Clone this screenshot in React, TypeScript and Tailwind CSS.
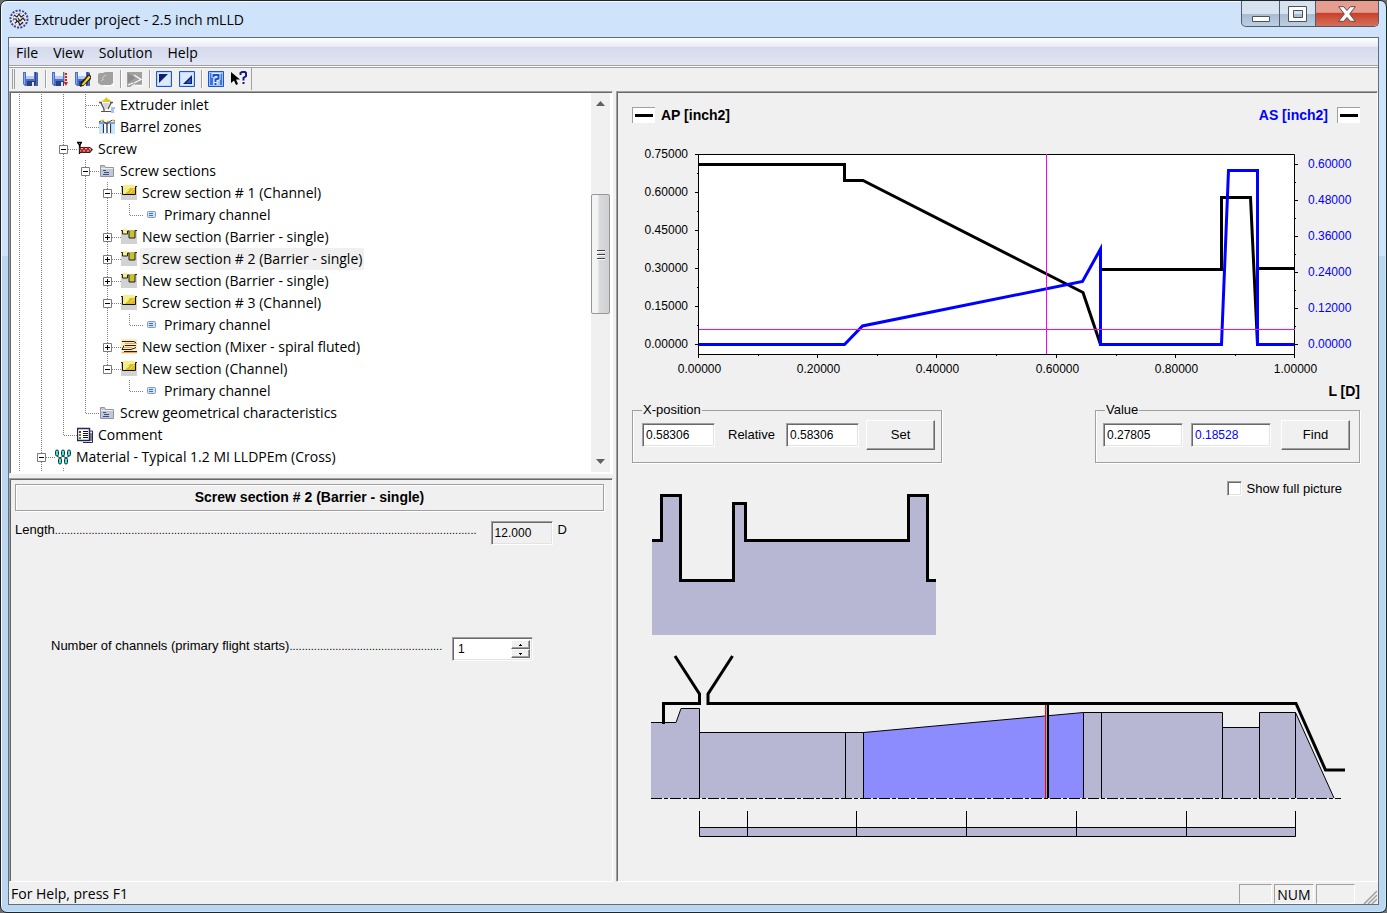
import type { ReactNode } from "react";

const sunken =
  "border border-t-[#a0a0a0] border-l-[#a0a0a0] border-r-white border-b-white shadow-[inset_1px_1px_0_#696969,inset_-1px_-1px_0_#e3e3e3]";
const panel =
  "border border-t-[#a0a0a0] border-l-[#a0a0a0] border-r-white border-b-white p-px shadow-[inset_1px_1px_0_#696969]";
const raised =
  "border border-t-white border-l-white border-r-[#696969] border-b-[#696969] bg-[#f0f0f0] shadow-[inset_-1px_-1px_0_#a0a0a0]";
const field = `${sunken} h-6 px-[3px] text-[12px] outline-none rounded-none`;
const uiFont = "font-['Open_Sans','Noto_Sans',sans-serif]";

/* ---------- icons ---------- */

function Icon({ children }: { children: ReactNode }) {
  return (
    <svg width="16" height="16" viewBox="0 0 16 16" className="shrink-0" aria-hidden="true">
      {children}
    </svg>
  );
}

const Floppy = () => (
  <>
    <path d="M0 1h14l1 1v13H2l-2-2z" fill="#4a70cc" />
    <path d="M14.500 2v13" stroke="#55607c" />
    <path d="M1 2h1v11H1z" fill="#8badf0" />
    <path d="M3 1h8v7H3z" fill="#eef3fc" />
    <path d="M3 5h8v3H3z" fill="#b9cbee" />
    <path d="M4 10h8v5H4z" fill="#2b3f80" />
    <path d="M9 11h2v4H9z" fill="#dfe7f7" />
    <path d="M12 1h1v13h-1z" fill="#2d4796" />
  </>
);

const SaveIcon = () => (
  <Icon>
    <Floppy />
  </Icon>
);

const SaveReportIcon = () => (
  <Icon>
    <Floppy />
    <path d="M12 0h4v16h-4z" fill="#f4f0f0" />
    <path d="M12.500 1v11" stroke="#b8b0b0" />
    <path d="M14 2v9" stroke="#d02020" strokeWidth="2" strokeDasharray="2 1" />
    <path d="M11.500 11H16l-2 4z" fill="#d02020" />
  </Icon>
);

const SaveEditIcon = () => (
  <Icon>
    <Floppy />
    <path d="M5 16l1-5 8-8 2 2v3l-8 7z" fill="#1a1a1a" />
    <path d="M6.500 13.500l7.500-9 1.500 2L8 14.500z" fill="#ffd21c" />
  </Icon>
);

const ImportIcon = () => (
  <Icon>
    <path d="M0 3l2-1h3l2-1h8v11l-2 2H3l-3-2z" fill="#a0a0a0" />
    <path d="M4 8q1-3 4-4M3 10l3-2" stroke="#cfcfcf" fill="none" />
    <path d="M16 2v12h-3l-1 1H6" stroke="#fff" fill="none" />
  </Icon>
);

const RunIcon = () => (
  <Icon>
    <path d="M0 1h15v13H9l-2-1-4 3H0z" fill="#a0a0a0" />
    <path d="M1 2l7 5-7 5z" fill="#8a8a8a" />
    <path d="M7 4l7 4.500L7 12M1 14l5-2M9 14.500h7V9" stroke="#fafafa" strokeWidth="1.300" fill="none" />
  </Icon>
);

const CornerIcon = ({ lower = false }: { lower?: boolean }) => (
  <Icon>
    <path d="M.5 .5h15v15H.5z" fill="#bcd6ff" stroke="#1c55d6" />
    <path d="M2 2h12v12H2z" fill="#dceaff" />
    <path d={lower ? "M13 4v9H4z" : "M3 3h9l-9 9z"} fill="#10206e" />
    {lower && <path d="M12 7v5H7z" fill="#2355c9" />}
  </Icon>
);

const HelpIcon = () => (
  <Icon>
    <path d="M.5 .5h15v15H.5z" fill="#9fc3fa" stroke="#1c55d6" />
    <path d="M2 2h3v12H2zM12 3h2v11h-2z" fill="#3b74e4" />
    <path d="M5.500 6.500V4h5v3.500l-3 2V14" stroke="#e8f1ff" strokeWidth="4" fill="none" />
    <path d="M5.500 6V4h5v3.500l-3 1V11M7.500 12v2" stroke="#1f4fc4" strokeWidth="2" fill="none" />
  </Icon>
);

const PointerHelpIcon = () => (
  <Icon>
    <path d="M0 1v11l3-2.500 2 4.500 2-1-2-4.500h4z" fill="#000" />
    <path d="M9.500 4V2l1.500-1h3l1 1v3l-2.500 2v2.500M12.500 11v2" stroke="#17178a" strokeWidth="2" fill="none" />
  </Icon>
);

const InletIcon = () => (
  <Icon>
    <path d="M3 5q1-3 3-3l1-2 2 2q2 0 3 3z" fill="#e5c51f" />
    <path d="M0 5.500h3M11 5.500h3M2 6l3 6v2M12 6l-3 6" stroke="#555" strokeWidth="1.400" fill="none" />
    <path d="M3.500 6h7l-2.500 6H6z" fill="#d5d5d5" />
    <path d="M2 14.500h10" stroke="#555" />
    <path d="M12 10h4v2h-1v4h-3z" fill="#a9c1fb" />
  </Icon>
);

const BarrelIcon = () => (
  <Icon>
    <path d="M0 5h16v10H0z" fill="#c9e5fc" />
    <path d="M0 3h16v2H0z" fill="#66a7ea" />
    <path d="M4.500 5v9M8 4v10M11.500 5v9" stroke="#2a3550" strokeWidth="1.200" />
    <path d="M5 5h2v9H5zM9 5h2v9H9z" fill="#fff" />
    <path d="M0 3q3-3 5 0t5 0 6-1" stroke="#4b3a12" fill="none" />
    <path d="M2 1.500h3M8 2.500h2M13 1.500h2" stroke="#f0b21c" strokeWidth="1.500" />
  </Icon>
);

const ScrewIcon = () => (
  <Icon>
    <path d="M0 1.500h5M1 2l1.500 2v9M4 2L3 4v2" stroke="#000" fill="none" strokeWidth="1.300" />
    <path d="M2 6h11l3 2.500-3 3.500H2z" fill="#222" />
    <path d="M3 7h10l1 1.500-1 2H3z" fill="#f6eaea" />
    <path d="M3 7l2 3.500L7 7l2 3.500L11 7l2 3.500" stroke="#cc1111" strokeWidth="1.600" fill="none" />
  </Icon>
);

const FolderIcon = () => (
  <Icon>
    <path d="M1.500 2.500h4l1 2h8v9h-13z" fill="#c4c7cb" stroke="#92969c" />
    <path d="M2 5h12v1H2z" fill="#eceef0" />
    <path d="M4 7.500h3M5 9.500h5M4 11.500h6" stroke="#2a4fa8" />
  </Icon>
);

const ChannelIcon = () => (
  <Icon>
    <path d="M0 1h16v14H0z" fill="#d2d2d2" />
    <path d="M2 0h12v9H2z" fill="#f6f08a" />
    <path d="M4 9l5-6h5v6z" fill="#d9bb2c" />
    <path d="M6 7l2-2M9 8l4-4" stroke="#f5e04c" />
    <path d="M0 1.500h1.500v8h13v-8H16" stroke="#111" fill="none" />
  </Icon>
);

const BarrierIcon = () => (
  <Icon>
    <path d="M0 1h16v14H0z" fill="#d2d2d2" />
    <path d="M2 0h4v5H2z" fill="#f6f08a" />
    <path d="M8 1h6v8H8z" fill="#c8c22c" />
    <path d="M0 1.500h1.500V5h5V2H8v7h6V1.500h2" stroke="#222" fill="none" />
  </Icon>
);

const MixerIcon = () => (
  <Icon>
    <path d="M0 0h16v15H0z" fill="#fdeebf" />
    <path d="M4 4.500h10M2 8.500h9M1 13.500h15" stroke="#f3a070" />
    <path d="M1 2.500h11q3 0 3 2M4 6.500h11M3 6.500l-2 4h9l5-2M3 12.500h13" stroke="#2e1c10" fill="none" />
  </Icon>
);

const DotIcon = () => (
  <Icon>
    <rect x="4.500" y="4.500" width="8" height="6" rx="1" fill="#cfe3f8" stroke="#7f9cc0" />
    <path d="M6 6.500h4M6 8.500h4" stroke="#3f6fc0" />
  </Icon>
);

const CommentIcon = () => (
  <Icon>
    <path d="M6 4h9.500v11.500H6" fill="#fff" stroke="#24245c" />
    <path d="M.5 1.500h12v12H.5z" fill="#fff" stroke="#24245c" strokeWidth="1.400" />
    <path d="M2 4h2v2H2z" fill="#c01818" />
    <path d="M2 7h2v2H2zM2 10h2v2H2z" fill="#3d8c3d" />
    <path d="M6 4.500h5M6 6.500h5M6 8.500h5M6 10.500h5M14 6v8" stroke="#111" />
  </Icon>
);

const MaterialIcon = () => (
  <Icon>
    {[0, 6, 12].map((x) => (
      <rect key={x} x={x + 0.5} y="1" width="3" height="6" rx="1.500" fill="#4fdcdc" stroke="#0b3b3b" />
    ))}
    {[3, 9].map((x) => (
      <rect key={x} x={x + 0.5} y="9" width="3" height="6" rx="1.500" fill="#4fdcdc" stroke="#0b3b3b" />
    ))}
    <path d="M2 7l3 2M8 7L5 9M8 7l3 2M14 7l-3 2" stroke="#0b3b3b" />
  </Icon>
);

const AppIcon = () => (
  <svg width="20" height="20" viewBox="0 0 20 20" aria-hidden="true">
    <circle cx="10" cy="10" r="8.500" fill="#eef0f8" stroke="#3a3aa0" strokeWidth="2" strokeDasharray="2 1.300" />
    <circle cx="10" cy="10" r="6" fill="none" stroke="#777" strokeDasharray="2 2" />
    <path
      d="M5 6l3 2 2-3 2 3 3-2M4 10h3l1 3M9 9l2 3 3-3 2 3M6 14l3-2 2 4 3-3"
      stroke="#222"
      strokeWidth="1.200"
      fill="none"
    />
  </svg>
);

/* ---------- tree ---------- */

// one letter per level: v line, t branch, l last branch, m open, e open + last, p closed, _ nothing
type Row = { guides: string; label: string; icon: ReactNode; selected?: boolean };

const rows: Row[] = [
  { guides: "vvvt", label: "Extruder inlet", icon: <InletIcon /> },
  { guides: "vvvl", label: "Barrel zones", icon: <BarrelIcon /> },
  { guides: "vvm", label: "Screw", icon: <ScrewIcon /> },
  { guides: "vvvm", label: "Screw sections", icon: <FolderIcon /> },
  { guides: "vvvvm", label: "Screw section # 1 (Channel)", icon: <ChannelIcon /> },
  { guides: "vvvvvl", label: "Primary channel", icon: <DotIcon /> },
  { guides: "vvvvp", label: "New section (Barrier - single)", icon: <BarrierIcon /> },
  { guides: "vvvvp", label: "Screw section # 2 (Barrier - single)", icon: <BarrierIcon />, selected: true },
  { guides: "vvvvp", label: "New section (Barrier - single)", icon: <BarrierIcon /> },
  { guides: "vvvvm", label: "Screw section # 3 (Channel)", icon: <ChannelIcon /> },
  { guides: "vvvvvl", label: "Primary channel", icon: <DotIcon /> },
  { guides: "vvvvp", label: "New section (Mixer - spiral fluted)", icon: <MixerIcon /> },
  { guides: "vvvve", label: "New section (Channel)", icon: <ChannelIcon /> },
  { guides: "vvvv_l", label: "Primary channel", icon: <DotIcon /> },
  { guides: "vvvl", label: "Screw geometrical characteristics", icon: <FolderIcon /> },
  { guides: "vvl", label: "Comment", icon: <CommentIcon /> },
  { guides: "vm", label: "Material - Typical 1.2 MI LLDPEm (Cross)", icon: <MaterialIcon /> },
];

function Guide({ kind, first }: { kind: string; first: boolean }) {
  const box = "mep".includes(kind);
  return (
    <svg
      width={first ? 19 : 22}
      height="22"
      viewBox={first ? "3 0 19 22" : "0 0 22 22"}
      className="shrink-0 overflow-visible"
      aria-hidden="true"
    >
      <g stroke="#808080" strokeDasharray="1 1" fill="none">
        {kind !== "_" && <path d={kind === "l" || kind === "e" ? "M11.500 0v11" : "M11.500 0v22"} />}
        {kind !== "v" && kind !== "_" && <path d="M12 11.500h13" />}
      </g>
      {box && (
        <>
          <path d="M7.500 7.500h8v8h-8z" fill="#fff" stroke="#7a7a7a" />
          <path d={kind === "p" ? "M9 11.500h5M11.500 9v5" : "M9 11.500h5"} stroke="#000" />
        </>
      )}
    </svg>
  );
}

function TreeRow({ guides, label, icon, selected }: Row) {
  return (
    <li className="flex h-[22px] items-center" role="treeitem" aria-selected={!!selected}>
      {guides.split("").map((kind, i) => (
        <Guide key={i} kind={kind} first={i === 0} />
      ))}
      <span className="mx-[3px]">{icon}</span>
      <span className={`px-[2px] leading-[22px] whitespace-nowrap ${selected ? "bg-[#f0f0f0]" : ""}`}>{label}</span>
    </li>
  );
}

function Scrollbar() {
  const grip = "h-px w-2 bg-[#404040] shadow-[0_1px_0_#fff]";
  return (
    <div className="mr-px flex w-[19px] shrink-0 flex-col items-center bg-[#f0f0f0]">
      <svg width="9" height="5" viewBox="0 0 9 5" className="mt-2" aria-hidden="true">
        <path d="M4.500 0L9 5H0z" fill="#606060" />
      </svg>
      <div className="mt-[88px] flex h-[120px] w-[19px] flex-col items-center justify-center gap-[3px] rounded-[2px] border border-[#979797] bg-linear-to-r from-[#f3f3f3] from-35% via-[#d9dadc] via-40% to-[#cfd0d3]">
        <i className={grip} />
        <i className={grip} />
        <i className={grip} />
      </div>
      <svg width="9" height="5" viewBox="0 0 9 5" className="mt-auto mb-2" aria-hidden="true">
        <path d="M4.500 5L9 0H0z" fill="#606060" />
      </svg>
    </div>
  );
}

function Tree() {
  return (
    <div className={`${panel} flex h-[383px] bg-white`}>
      <ul role="tree" className={`min-w-0 flex-1 overflow-hidden pt-px text-[14px] ${uiFont}`}>
        {rows.map((row, i) => (
          <TreeRow key={i} {...row} />
        ))}
        <li className="flex" aria-hidden="true">
          <Guide kind="v" first />
          <Guide kind="v" first={false} />
          <Guide kind="v" first={false} />
        </li>
      </ul>
      <Scrollbar />
    </div>
  );
}

/* ---------- section properties ---------- */

const Leader = ({ dots }: { dots: number }) => (
  <span className="min-w-0 flex-1 overflow-hidden text-[11px] leading-[19px] whitespace-nowrap" aria-hidden="true">
    {".".repeat(dots)}
  </span>
);

function Properties() {
  return (
    <div className={`${panel} flex-1 text-[13px]`}>
      <div className="p-1">
        <h2 className="mr-[3px] border border-[#a0a0a0] py-[2px] text-center text-[14px] leading-[21px] font-bold shadow-[inset_1px_1px_0_#fff,1px_1px_0_#fff]">
          Screw section # 2 (Barrier - single)
        </h2>
        <div className="mt-[10px] flex w-[552px] max-w-full items-start">
          <label htmlFor="length" className="leading-[18px]">
            Length
          </label>
          <Leader dots={138} />
          <input id="length" readOnly defaultValue="12.000" className={`${field} ml-2 w-[62px] bg-[#f0f0f0]`} />
          <span className="ml-[5px] leading-[18px]">D</span>
        </div>
        <div className="mt-[92px] ml-9 flex w-[482px] max-w-full items-start">
          <label htmlFor="channels" className="leading-[18px]">
            Number of channels (primary flight starts)
          </label>
          <Leader dots={50} />
          <div className={`${sunken} ml-2 flex h-6 w-[81px] bg-white p-[2px]`}>
            <input
              id="channels"
              defaultValue="1"
              className="min-w-0 flex-1 bg-white pl-[3px] text-[12px] outline-none"
            />
            <div className="flex w-[19px] flex-col">
              <button className={`${raised} flex flex-1 items-center justify-center`} aria-label="Increase">
                <svg width="3" height="2" viewBox="0 0 3 2">
                  <path d="M1 0h1v1h1v1H0V1h1z" />
                </svg>
              </button>
              <button className={`${raised} flex flex-1 items-center justify-center`} aria-label="Decrease">
                <svg width="3" height="2" viewBox="0 0 3 2">
                  <path d="M0 0h3v1H2v1H1V1H0z" />
                </svg>
              </button>
            </div>
          </div>
        </div>
      </div>
    </div>
  );
}

/* ---------- chart ---------- */

const leftTicks = ["0.75000", "0.60000", "0.45000", "0.30000", "0.15000", "0.00000"];
const rightTicks = ["0.60000", "0.48000", "0.36000", "0.24000", "0.12000", "0.00000"];
const bottomTicks = ["0.00000", "0.20000", "0.40000", "0.60000", "0.80000", "1.00000"];

function Chart() {
  return (
    <svg
      viewBox="632 140 728 240"
      className="block h-auto w-full text-[12px]"
      role="img"
      aria-label="AP and AS against L"
    >
      <path d="M698.500 154.500h596v200h-596z" fill="#fff" stroke="#000" />
      {leftTicks.map((t, i) => (
        <g key={t}>
          <path d={`M695 ${154.5 + i * 38}h4`} stroke="#000" />
          {i < 5 && <path d={`M697 ${173.5 + i * 38}h2`} stroke="#000" />}
          <text x="688" y={158 + i * 38} textAnchor="end">
            {t}
          </text>
        </g>
      ))}
      {rightTicks.map((t, i) => (
        <g key={t}>
          <path d={`M1294 ${164.5 + i * 36}h4`} stroke="#000" />
          {i < 5 && <path d={`M1294 ${182.5 + i * 36}h2`} stroke="#000" />}
          <text x="1308" y={168 + i * 36} fill="#00f">
            {t}
          </text>
        </g>
      ))}
      {bottomTicks.map((t, i) => {
        const x = 698.5 + Math.round(i * 119.2);
        return (
          <g key={t}>
            <path d={`M${x} 354v4`} stroke="#000" />
            {i < 5 && <path d={`M${x + 60} 354v2`} stroke="#000" />}
            <text x={x + 1} y="373" textAnchor="middle">
              {t}
            </text>
          </g>
        );
      })}
      <g fill="none" strokeWidth="3">
        <path
          d="M699 164.500H844.500V180.500H863L1083 292.500L1100.500 344.500V269.500H1221.500V197.500H1250.500L1257.500 344.500V268.500H1294"
          stroke="#000"
        />
        <path
          d="M699 344.500H844.500L862.500 326L1082.500 281.500L1100.500 249V344.500H1221.500L1228.500 170.500H1257.500V344.500H1294"
          stroke="#00f"
        />
      </g>
      <path d="M1046.500 154v200M699 329.500h596" stroke="#f0f" />
    </svg>
  );
}

const Swatch = () => (
  <span className="flex h-4 w-[23px] items-center justify-center border-t border-l border-[#a0a0a0] bg-white">
    <i className="h-[3px] w-[18px] bg-black" />
  </span>
);

function Controls() {
  const group =
    "flex items-center border border-[#a0a0a0] pb-3 pt-[3px] pl-[9px] shadow-[1px_1px_0_#fff,inset_1px_0_0_#fff]";
  const button = `${raised} h-[30px] w-[69px]`;
  return (
    <div className="flex flex-wrap items-start justify-between text-[13px]">
      <fieldset className={`${group} pr-[6px]`}>
        <legend className="px-px leading-[14px]">X-position</legend>
        <input aria-label="X-position" defaultValue="0.58306" className={`${field} w-[73px] bg-white`} />
        <label htmlFor="relative" className="mr-[9px] ml-[13px] w-[49px]">
          Relative
        </label>
        <input id="relative" defaultValue="0.58306" className={`${field} w-[73px] bg-white`} />
        <button className={`${button} ml-[7px]`}>Set</button>
      </fieldset>
      <fieldset className={`${group} pr-[9px]`}>
        <legend className="px-px leading-[14px]">Value</legend>
        <input aria-label="AP value" defaultValue="0.27805" className={`${field} -ml-[2px] w-20 bg-white`} />
        <input aria-label="AS value" defaultValue="0.18528" className={`${field} ml-2 w-20 bg-white text-[#00f]`} />
        <button className={`${button} ml-[10px]`}>Find</button>
      </fieldset>
    </div>
  );
}

/* ---------- drawings ---------- */

const channelLine =
  "652 540.5 661.5 540.5 661.5 495.5 680.5 495.5 680.5 580.5 733.5 580.5 733.5 503.5 745.5 503.5 745.5 540.5 908.5 540.5 908.5 495.5 927.5 495.5 927.5 580.5 936 580.5";

const CrossSection = () => (
  <svg width="310" height="160" viewBox="632 480 310 160" role="img" aria-label="Channel cross section">
    <polygon points={`652 635 ${channelLine} 936 635`} fill="#b7b7d3" />
    <polyline points={channelLine} fill="none" stroke="#000" strokeWidth="3" />
  </svg>
);

const ScrewProfile = () => (
  <svg viewBox="632 650 728 195" className="block h-auto w-full" role="img" aria-label="Screw profile">
    <g fill="#b7b7d3">
      <path d="M651 722.500h25l5-14h18.500V798H651z" />
      <path d="M699.500 732.500h164V798h-164zM1083.500 712.500h139v15h37v-15h36L1334 798H1083.500z" />
      <path d="M699.500 827.500h596v9h-596z" stroke="#000" />
    </g>
    <path d="M863.500 732.500L1083.500 712.500V798h-220z" fill="#8c8cff" />
    <g fill="none" stroke="#000">
      <path d="M651 722.500h25l5-14h18.500V798M699.500 732.500h164L1083.500 712.500h139V798M845.500 732.500V798M863.500 732.500V798M1083.500 712.500V798M1101.500 712.500V798" />
      <path d="M1222.500 727.500h37M1259.500 798v-85.500h36V798M1295.500 712.500L1334 798" />
      <path d="M651 798.500h690" strokeDasharray="11 2 4 2" />
      <path d="M699.500 811v25M747.500 811v25M856.500 811v25M966.500 811v25M1076.500 811v25M1186.500 811v25M1295.500 811v25" />
    </g>
    <path d="M1045.500 704v94" stroke="#f00" />
    <path d="M1046.500 704v94" stroke="#a8a8a8" />
    <path d="M1048 704v94" stroke="#000" strokeWidth="2" />
    <g fill="none" stroke="#000" strokeWidth="3">
      <path d="M675 656l24.500 38v9.500h-36V724" />
      <path d="M732.500 656L708 694v9.500h588l29.500 66.500H1345" />
    </g>
  </svg>
);

/* ---------- window ---------- */

const ToolButton = ({ label, children }: { label: string; children: ReactNode }) => (
  <button aria-label={label} className="flex h-[23px] w-[23px] items-center justify-center">
    {children}
  </button>
);

const Divider = () => <span className="ml-[3px] mr-[2px] h-[18px] w-px bg-[#a0a0a0] shadow-[1px_0_0_#fff]" />;

function TitleBar() {
  const glass = "flex items-center justify-center border-r border-[#4f5b6b]";
  return (
    <header className="flex h-[36px] justify-between">
      <h1 className={`flex items-center gap-[5px] pl-px text-[14px] ${uiFont}`}>
        <AppIcon />
        Extruder project - 2.5 inch mLLD
      </h1>
      <div className="flex h-[26px] overflow-hidden rounded-b-[5px] border border-t-0 border-[#4f5b6b] bg-linear-to-b from-[#d6e2ee] from-50% via-[#a7bad0] via-52% to-[#bccee2]">
        <button aria-label="Minimize" className={`${glass} w-[38px]`}>
          <svg width="18" height="18" viewBox="0 0 18 18">
            <path d="M.5 11.500h17v5H.5z" fill="#fff" stroke="#4a5260" />
          </svg>
        </button>
        <button aria-label="Maximize" className={`${glass} w-9`}>
          <svg width="20" height="16" viewBox="0 0 20 16">
            <path d="M.5 .5h18v15H.5zM5.500 4.500h9v7h-9z" fill="#fff" fillRule="evenodd" stroke="#4a5260" />
          </svg>
        </button>
        <button
          aria-label="Close"
          className="flex w-[62px] items-center justify-center bg-linear-to-b from-[#e59d8f] from-45% via-[#c9402a] via-50% to-[#d3705a]"
        >
          <svg width="18" height="16" viewBox="0 0 18 16">
            <path
              d="M.7 .7h5L9 4.500 12.300 .7h5L11.700 8l5.600 7.300h-5L9 11.500l-3.300 3.800h-5L6.300 8z"
              fill="#fff"
              stroke="#5a4a50"
            />
          </svg>
        </button>
      </div>
    </header>
  );
}

export default function App() {
  const pane = "h-[20px] border border-t-[#a0a0a0] border-l-[#a0a0a0] border-r-white border-b-white";
  return (
    <div className="min-h-screen bg-[#6d6d6d] font-['Liberation_Sans',Arial,sans-serif] text-black">
      <div className="flex min-h-screen flex-col rounded-[7px] border border-[#20252c] bg-linear-to-b from-[#cfe3fb] from-28% to-[#bdd6f0] to-28% px-[7px] pb-[7px] shadow-[inset_1px_1px_0_#f4faff,inset_-1px_-1px_0_#b8ecff]">
        <TitleBar />
        <div className="flex flex-1 flex-col border border-[#5f6f82] bg-[#f0f0f0]">
          <nav
            className={`flex h-[27px] items-center gap-[15px] bg-[linear-gradient(#fff,#e6eaf5_33%,#d4daed_33%,#e2e6f4)] px-[7px] pt-[2px] text-[14px] ${uiFont}`}
          >
            <button>File</button>
            <button>View</button>
            <button>Solution</button>
            <button>Help</button>
          </nav>
          <div className="flex h-[26px] items-center border-t border-[#a0a0a0] pt-px shadow-[inset_0_1px_0_#fff,inset_0_2px_0_#a0a0a0]">
            <span className="ml-[3px] mr-1 h-[20px] w-[3px] border-r border-l border-[#a0a0a0]" />
            <ToolButton label="Save">
              <SaveIcon />
            </ToolButton>
            <Divider />
            <ToolButton label="Save report">
              <SaveReportIcon />
            </ToolButton>
            <ToolButton label="Save as">
              <SaveEditIcon />
            </ToolButton>
            <ToolButton label="Import">
              <ImportIcon />
            </ToolButton>
            <Divider />
            <ToolButton label="Run">
              <RunIcon />
            </ToolButton>
            <Divider />
            <ToolButton label="Previous view">
              <CornerIcon />
            </ToolButton>
            <ToolButton label="Next view">
              <CornerIcon lower />
            </ToolButton>
            <Divider />
            <ToolButton label="Help topics">
              <HelpIcon />
            </ToolButton>
            <ToolButton label="Context help">
              <PointerHelpIcon />
            </ToolButton>
            <span className="ml-px h-[22px] w-px bg-[#a0a0a0]" />
          </div>

          <main className="flex flex-1 gap-[3px]">
            <div className="flex w-[604px] shrink-0 flex-col gap-1">
              <Tree />
              <Properties />
            </div>
            <section className={`${panel} min-w-0 flex-1`}>
              <div className="pt-[14px] pr-4 pl-[14px]">
                <div className="flex h-4 items-center justify-between text-[14px] font-bold">
                  <span className="flex items-center gap-[6px]">
                    <Swatch />
                    AP [inch2]
                  </span>
                  <span className="flex items-center gap-[9px] text-[#00f]">
                    AS [inch2]
                    <Swatch />
                  </span>
                </div>
                <div className="mt-[17px]">
                  <Chart />
                </div>
                <p className="mt-[3px] text-right text-[14px] leading-[16px] font-bold">L [D]</p>
                <div className="mt-1">
                  <Controls />
                </div>
                <div className="mt-[17px] flex items-start justify-between">
                  <CrossSection />
                  <label className="mr-[18px] flex items-center gap-[5px] text-[13px] leading-[17px]">
                    <input type="checkbox" className={`${sunken} h-[15px] w-[15px] appearance-none bg-white`} />
                    Show full picture
                  </label>
                </div>
                <div className="mt-[10px]">
                  <ScrewProfile />
                </div>
              </div>
            </section>
          </main>

          <footer className={`flex h-[22px] items-center pt-px text-[14px] ${uiFont}`}>
            <span className="flex-1 pl-[2px]">For Help, press F1</span>
            <span className={`${pane} w-[33px]`} />
            <span className={`${pane} ml-[2px] w-10 text-center leading-[20px]`}>NUM</span>
            <span className={`${pane} ml-[2px] w-[39px]`} />
            <svg width="14" height="14" viewBox="0 0 14 14" className="mt-auto mr-px ml-2" aria-hidden="true">
              <path d="M1 14L14 1M5 14l9-9M9 14l5-5" stroke="#a0a0a0" strokeWidth="1.500" />
            </svg>
          </footer>
        </div>
      </div>
    </div>
  );
}
